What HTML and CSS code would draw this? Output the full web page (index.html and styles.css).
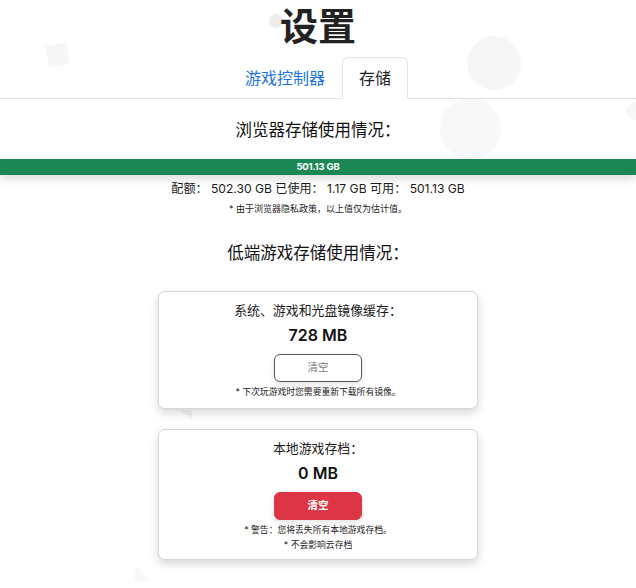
FILE: index.html
```html
<!DOCTYPE html>
<html lang="zh-CN">
<head>
<meta charset="utf-8">
<title>设置</title>
<link rel="stylesheet" href="styles.css">
</head>
<body>
<div class="bg">
  <span class="shape c1"></span>
  <span class="shape c2"></span>
  <span class="shape c3"></span>
  <span class="shape c4"></span>
  <span class="shape sq"></span>
  <span class="shape tri t1"></span>
  <span class="shape tri t2"></span>
</div>
<main class="page">
  <h1 class="title">设置</h1>
  <ul class="tabs">
    <li><a class="tab-link">游戏控制器</a></li>
    <li><a class="tab-link active">存储</a></li>
  </ul>

  <h2 class="section-title first">浏览器存储使用情况：</h2>
  <div class="progress">
    <div class="progress-bar" style="width:100%">501.13 GB</div>
  </div>
  <p class="quota">配额： 502.30 GB 已使用： 1.17 GB 可用： 501.13 GB</p>
  <p class="note">* 由于浏览器隐私政策，以上值仅为估计值。</p>

  <h2 class="section-title second">低端游戏存储使用情况：</h2>

  <section class="card">
    <div class="card-title">系统、游戏和光盘镜像缓存：</div>
    <div class="card-value">728 MB</div>
    <button class="btn btn-outline">清空</button>
    <p class="note card-note">* 下次玩游戏时您需要重新下载所有镜像。</p>
  </section>

  <section class="card card-second">
    <div class="card-title">本地游戏存档：</div>
    <div class="card-value">0 MB</div>
    <button class="btn btn-danger">清空</button>
    <p class="note card-note">* 警告：您将丢失所有本地游戏存档。</p>
    <p class="note card-note tight">* 不会影响云存档</p>
  </section>
</main>
</body>
</html>
```

FILE: styles.css
```css
* { box-sizing: border-box; }

html, body {
  margin: 0;
  padding: 0;
  background: #ffffff;
}

body {
  font-family: Inter, "Noto Sans CJK SC", "Noto Sans", sans-serif;
  color: #212529;
  width: 636px;
  height: 588px;
  overflow: hidden;
  position: relative;
}

.bg {
  position: absolute;
  inset: 0;
  z-index: 0;
  pointer-events: none;
}

.shape {
  position: absolute;
  background: #f6f6f6;
  display: block;
}

.c1 { left: 467px; top: 36px; width: 54px; height: 54px; border-radius: 50%; }
.c2 { left: 440px; top: 98px; width: 61px; height: 61px; border-radius: 50%; background: #f8f8f8; }
.c3 { left: 626px; top: 102px; width: 22px; height: 18px; border-radius: 50%; background: #f7f7f7; }
.c4 { left: 269px; top: 14px; width: 14px; height: 14px; border-radius: 50%; background: #ececec; }
.sq { left: 47px; top: 44px; width: 21px; height: 21px; transform: rotate(-10deg); background: #f6f6f6; }

.tri {
  background: transparent;
  width: 0;
  height: 0;
}
.t1 {
  left: 180px; top: 410px;
  border-left: 12px solid transparent;
  border-top: 10px solid #f4f4f4;
}
.t2 {
  left: 134px; top: 567px;
  border-right: 14px solid transparent;
  border-left: 2px solid transparent;
  border-bottom: 14px solid #f8f8f8;
}

.page {
  position: relative;
  z-index: 1;
  display: flex;
  flex-direction: column;
  align-items: center;
}

.title {
  margin: 3px 0 0;
  font-size: 38px;
  line-height: 46px;
  font-weight: 700;
  color: #222;
}

.tabs {
  list-style: none;
  margin: 8px 0 0;
  padding: 0;
  width: 100%;
  display: flex;
  justify-content: center;
  border-bottom: 1px solid #dee2e6;
}

.tab-link {
  display: block;
  padding: 8px 16px;
  font-size: 16px;
  line-height: 24px;
  color: #1a74e4;
  border: 1px solid transparent;
  border-top-left-radius: 6px;
  border-top-right-radius: 6px;
  margin-bottom: -1px;
  cursor: pointer;
}

.tab-link.active {
  color: #222;
  background: #fff;
  border-color: #dee2e6 #dee2e6 #fff;
}

.section-title {
  margin: 0;
  font-size: 16.5px;
  line-height: 24px;
  font-weight: 400;
  color: #111;
}
.section-title.first { margin-top: 19px; }
.section-title.second { margin-top: 25px; }

.progress {
  width: 100%;
  height: 16px;
  margin-top: 17px;
  background: #e9ecef;
  box-shadow: 0 4px 8px rgba(0, 0, 0, 0.14);
  display: flex;
}

.progress-bar {
  background: #1b8754;
  color: #fff;
  font-size: 9.5px;
  font-weight: 700;
  line-height: 16px;
  text-align: center;
  letter-spacing: -0.2px;
}

.quota {
  margin: 4px 0 0;
  font-size: 12.1px;
  line-height: 20px;
  color: #1a1a1a;
}

.note {
  margin: 0;
  font-size: 9px;
  line-height: 14px;
  color: #222;
}
.quota + .note { margin-top: 3px; }

.card {
  width: 320px;
  margin-top: 26px;
  padding: 9px 16px 9px;
  border: 1px solid #d6d6d6;
  border-radius: 7px;
  background: #fff;
  box-shadow: 0 4px 10px rgba(0, 0, 0, 0.16);
  display: flex;
  flex-direction: column;
  align-items: center;
}
.card-second { margin-top: 20px; padding-bottom: 7px; }

.card-title {
  font-size: 12.9px;
  line-height: 20px;
  color: #1a1a1a;
}

.card-value {
  margin-top: 2px;
  font-size: 16px;
  line-height: 24px;
  font-weight: 600;
  color: #111;
}

.btn {
  margin-top: 7px;
  width: 88px;
  height: 28px;
  border-radius: 6px;
  font-family: inherit;
  font-size: 10.5px;
  line-height: 26px;
  cursor: pointer;
  padding: 0;
  flex: none;
}

.btn-outline {
  background: #fff;
  border: 1px solid #555;
  color: #777;
  box-shadow: 0 2px 6px rgba(0, 0, 0, 0.12);
}

.btn-danger {
  background: #dc3545;
  border: 1px solid #dc3545;
  color: #fff;
  font-weight: 700;
  box-shadow: 0 2px 6px rgba(0, 0, 0, 0.12);
}

.card-note { margin-top: 3px; font-size: 8.8px; }
.card-note.tight { margin-top: 1px; }
```
